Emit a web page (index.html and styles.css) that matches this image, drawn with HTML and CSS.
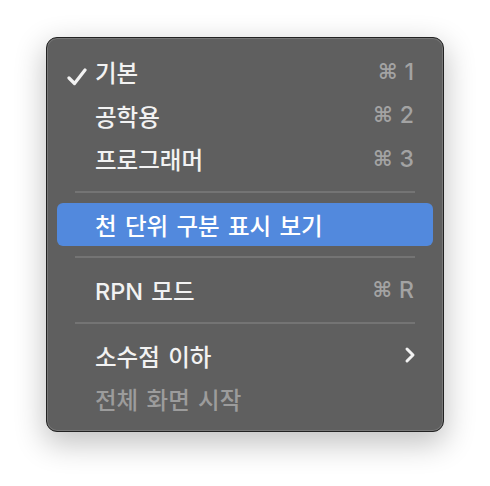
FILE: index.html
```html
<!DOCTYPE html>
<html lang="ko">
<head>
    <meta charset="UTF-8">
    <title>계산기 보기 메뉴</title>
    <link rel="stylesheet" href="styles.css">
</head>
<body>
    <div class="menu">
        <div class="item">
            <span class="check">
                <svg width="20" height="18" viewBox="0 0 20 18"><path d="M2 10 L7.5 15.5 L18 2" fill="none" stroke="#f2f2f2" stroke-width="3.2" stroke-linecap="round" stroke-linejoin="round"/></svg>
            </span>
            <span class="label">기본</span>
            <span class="key"><span class="cmd">⌘</span>1</span>
        </div>
        <div class="item">
            <span class="label">공학용</span>
            <span class="key"><span class="cmd">⌘</span>2</span>
        </div>
        <div class="item">
            <span class="label">프로그래머</span>
            <span class="key"><span class="cmd">⌘</span>3</span>
        </div>
        <div class="sep"></div>
        <div class="item active">
            <span class="label">천 단위 구분 표시 보기</span>
        </div>
        <div class="sep"></div>
        <div class="item">
            <span class="label">RPN 모드</span>
            <span class="key"><span class="cmd">⌘</span>R</span>
        </div>
        <div class="sep"></div>
        <div class="item">
            <span class="label">소수점 이하</span>
            <span class="arrow">
                <svg width="12" height="18" viewBox="0 0 12 18"><path d="M3 3 L9 9 L3 15" fill="none" stroke="#f2f2f2" stroke-width="3" stroke-linecap="round" stroke-linejoin="round"/></svg>
            </span>
        </div>
        <div class="item disabled">
            <span class="label">전체 화면 시작</span>
        </div>
    </div>
</body>
</html>
```

FILE: styles.css
```css
html,
body {
    height: 100%;
}
body {
    margin: 0;
    box-sizing: border-box;
    padding: 37px 0 0 46px;
    background-color: #fff;
    font-family: Inter, "Noto Sans CJK KR", sans-serif;
}
.menu {
    width: 398px;
    box-sizing: border-box;
    padding: 12px 10px 10px 10px;
    background-color: #5f5f5f;
    border: 1px solid #222;
    border-radius: 11px;
    box-shadow: inset 0 0 0 1px #777, 0 10px 30px 2px rgba(0, 0, 0, 0.24);
}
.item {
    position: relative;
    display: flex;
    align-items: center;
    height: 43.5px;
    padding: 0 19px 0 38px;
    border-radius: 6px;
    color: #f2f2f2;
    font-size: 23.5px;
    font-weight: 500;
    word-spacing: 2px;
}
.item .label {
    flex: 1;
    padding-top: 1px;
}
.item.active {
    background-color: #5289dd;
    color: #fff;
}
.item.disabled {
    color: #9c9c9c;
}
.check {
    position: absolute;
    left: 10px;
    top: 13px;
}
.key {
    display: flex;
    align-items: center;
    color: #a3a3a3;
    font-size: 23px;
}
.cmd {
    font-family: "DejaVu Sans", sans-serif;
    font-size: 21px;
    font-weight: bold;
    margin-right: 7px;
}
.arrow {
    display: flex;
    margin-right: -2px;
}
.sep {
    height: 2px;
    margin: 10px 18px;
    background-color: #747474;
}
```
